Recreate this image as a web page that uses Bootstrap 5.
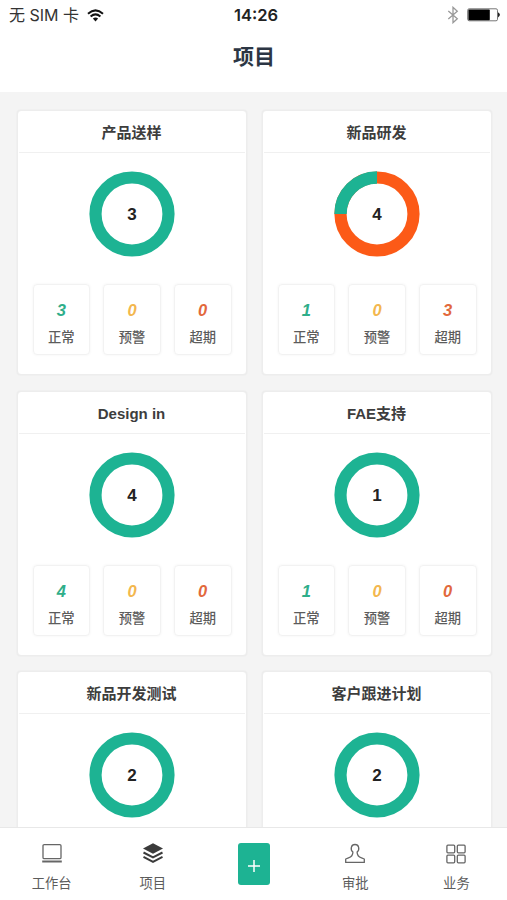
<!DOCTYPE html>
<html lang="zh-CN">
<head>
<meta charset="utf-8">
<meta name="viewport" content="width=device-width, initial-scale=1">
<title>项目</title>
<link href="https://cdn.jsdelivr.net/npm/bootstrap@5.3.0/dist/css/bootstrap.min.css" rel="stylesheet">
<style>
  body { font-family: "Liberation Sans", "Noto Sans CJK SC", sans-serif; background: #f4f4f4; color: #333; }
  .screen { height: 900px; }
  .status-bar { height: 30px; padding: 0 6px 0 9px; font-family: Inter, "Noto Sans CJK SC", sans-serif; font-size: 16px; color: #333; }
  .status-bar > div { flex: 1 1 0; }
  .status-time { font-size: 16.5px; color: #222; padding-left: 2px; }
  .page-title { height: 62px; padding: 11px 0 0 1px; font-size: 21px; line-height: 31px; color: #2c3644; }
  .board { padding: 18px 15px 0 16.500px; }
  .board-grid { display: grid; grid-template-columns: 230px 230px; gap: 15.5px 15px; }
  .project { height: 265px; border: 1px solid #ededed; border-radius: 4px; box-shadow: 0 0 2px rgba(0,0,0,.07); }
  .project-head { height: 42px; margin: 0 1px; padding-top: 1px; font-size: 15px; line-height: 41px; border-bottom: 1px solid #f0f0f0; color: #3d3d3d; }
  .ring { width: 86px; height: 86px; margin: 18px auto 0; left: .4px; }
  .ring svg { display: block; width: 86px; height: 86px; }
  .ring-count { position: absolute; inset: 0; line-height: 87px; font-size: 17px; color: #222; }
  .stats { padding: 27px 14px 0 15px; gap: 13px; }
  .stat { height: 71px; border: 1px solid #f2f2f2; border-radius: 4px; box-shadow: 0 0 3px rgba(0,0,0,.05); padding-top: 14px; }
  .stat-num { font-size: 16.5px; line-height: 22px; }
  .stat-label { font-size: 13.3px; line-height: 20px; margin-top: 7px; color: #5c5c5c; font-weight: 500; }
  .ok { color: #2fae8a; } .warn { color: #f3b74e; } .late { color: #e2683c; }
  .tabs { height: 73px; border-top: 1px solid #e8e8e8; z-index: 2; padding-left: 1px; }
  .tab { color: #5c5c5c; font-size: 13.3px; line-height: 20px; padding-top: 14px; }
  .tab svg { display: block; width: 24px; height: 24px; margin: 0 auto 8px; }
  .add-btn { width: 32px; height: 42px; margin-top: 15px; border-radius: 3px; background: #1db393; padding: 0; }
</style>
</head>
<body>
<svg class="d-none">
  <symbol id="ring-full" viewBox="0 0 86 86"><circle cx="43" cy="43" r="36.5" fill="none" stroke="#1db393" stroke-width="12.2"/></symbol>
  <symbol id="ring-quarter" viewBox="0 0 86 86"><circle cx="43" cy="43" r="36.5" fill="none" stroke="#fc5a17" stroke-width="12.2"/><path d="M6.5 43A36.5 36.5 0 0 1 43 6.5" fill="none" stroke="#1db393" stroke-width="12.4"/></symbol>
</svg>
<div class="screen d-flex flex-column overflow-hidden">
  <header class="bg-white flex-shrink-0">
    <div class="status-bar d-flex align-items-center">
      <div class="d-flex align-items-center">
        <span>无 SIM 卡</span>
        <svg class="ms-2" width="17" height="13" viewBox="0 0 17 13" fill="none" stroke="#111" stroke-width="2"><path d="M1 4.7Q8.5-1.9 16 4.7M3.6 7.5Q8.5 3.2 13.4 7.5"/><path d="M5.9 9.6Q8.5 7.4 11.1 9.6L8.5 12.4Z" fill="#111" stroke="none"/></svg>
      </div>
      <div class="status-time text-center fw-semibold">14:26</div>
      <div class="d-flex align-items-center justify-content-end">
        <svg width="12" height="18" viewBox="0 0 12 18" fill="none" stroke="#999" stroke-width="1.3"><path d="M1.3 5L10.3 12.8L6 16.7V1.3L10.3 5.2L1.3 13"/></svg>
        <svg class="ms-2" width="34" height="14" viewBox="0 0 34 14"><rect x=".7" y=".8" width="29.8" height="12" rx="1.5" fill="#fff" stroke="#777"/><rect x="1.400" y="1.600" width="21.400" height="10.600" rx=".8" fill="#000"/><path d="M31 4.2q3.800 2.600 0 5.200z" fill="#222"/></svg>
      </div>
    </div>
    <h1 class="page-title text-center fw-bold mb-0">项目</h1>
  </header>

  <main class="board flex-grow-1 overflow-hidden">
    <div class="board-grid">
      <section class="project bg-white">
        <h2 class="project-head text-center fw-bold mb-0">产品送样</h2>
        <div class="ring position-relative"><svg><use href="#ring-full"/></svg><span class="ring-count text-center fw-bold">3</span></div>
        <div class="stats d-flex text-center">
          <div class="stat flex-fill"><div class="stat-num fw-bold fst-italic ok">3</div><div class="stat-label">正常</div></div>
          <div class="stat flex-fill"><div class="stat-num fw-bold fst-italic warn">0</div><div class="stat-label">预警</div></div>
          <div class="stat flex-fill"><div class="stat-num fw-bold fst-italic late">0</div><div class="stat-label">超期</div></div>
        </div>
      </section>
      <section class="project bg-white">
        <h2 class="project-head text-center fw-bold mb-0">新品研发</h2>
        <div class="ring position-relative"><svg><use href="#ring-quarter"/></svg><span class="ring-count text-center fw-bold">4</span></div>
        <div class="stats d-flex text-center">
          <div class="stat flex-fill"><div class="stat-num fw-bold fst-italic ok">1</div><div class="stat-label">正常</div></div>
          <div class="stat flex-fill"><div class="stat-num fw-bold fst-italic warn">0</div><div class="stat-label">预警</div></div>
          <div class="stat flex-fill"><div class="stat-num fw-bold fst-italic late">3</div><div class="stat-label">超期</div></div>
        </div>
      </section>
      <section class="project bg-white">
        <h2 class="project-head text-center fw-bold mb-0">Design in</h2>
        <div class="ring position-relative"><svg><use href="#ring-full"/></svg><span class="ring-count text-center fw-bold">4</span></div>
        <div class="stats d-flex text-center">
          <div class="stat flex-fill"><div class="stat-num fw-bold fst-italic ok">4</div><div class="stat-label">正常</div></div>
          <div class="stat flex-fill"><div class="stat-num fw-bold fst-italic warn">0</div><div class="stat-label">预警</div></div>
          <div class="stat flex-fill"><div class="stat-num fw-bold fst-italic late">0</div><div class="stat-label">超期</div></div>
        </div>
      </section>
      <section class="project bg-white">
        <h2 class="project-head text-center fw-bold mb-0">FAE支持</h2>
        <div class="ring position-relative"><svg><use href="#ring-full"/></svg><span class="ring-count text-center fw-bold">1</span></div>
        <div class="stats d-flex text-center">
          <div class="stat flex-fill"><div class="stat-num fw-bold fst-italic ok">1</div><div class="stat-label">正常</div></div>
          <div class="stat flex-fill"><div class="stat-num fw-bold fst-italic warn">0</div><div class="stat-label">预警</div></div>
          <div class="stat flex-fill"><div class="stat-num fw-bold fst-italic late">0</div><div class="stat-label">超期</div></div>
        </div>
      </section>
      <section class="project bg-white">
        <h2 class="project-head text-center fw-bold mb-0">新品开发测试</h2>
        <div class="ring position-relative"><svg><use href="#ring-full"/></svg><span class="ring-count text-center fw-bold">2</span></div>
      </section>
      <section class="project bg-white">
        <h2 class="project-head text-center fw-bold mb-0">客户跟进计划</h2>
        <div class="ring position-relative"><svg><use href="#ring-full"/></svg><span class="ring-count text-center fw-bold">2</span></div>
      </section>
    </div>
  </main>

  <nav class="tabs row g-0 bg-white flex-shrink-0 text-center">
    <a class="tab col text-decoration-none" href="#"><svg viewBox="0 0 24 24" fill="none" stroke="#666" stroke-width="1.3"><rect x="3" y="2.6" width="18" height="14" rx="1.2"/><path d="M2.2 19.5H21.8" stroke-width="2"/></svg>工作台</a>
    <a class="tab col text-decoration-none" href="#"><svg viewBox="0 0 24 24"><path d="M12 1.2L22 6.5L12 11.8L2 6.5Z" fill="#3b3b3b"/><path d="M2.5 10.5L12 15.4L21.5 10.5M2.5 14.8L12 19.8L21.5 14.8" fill="none" stroke="#3b3b3b" stroke-width="2"/></svg>项目</a>
    <div class="col"><button class="add-btn btn d-inline-flex align-items-center justify-content-center" aria-label="新建"><svg class="mt-1" width="14" height="14" viewBox="0 0 14 14" stroke="#fff" stroke-width="1.5"><path d="M7 1V13M1 7H13"/></svg></button></div>
    <a class="tab col text-decoration-none" href="#"><svg viewBox="0 0 24 24" fill="none" stroke="#666" stroke-width="1.3" stroke-linejoin="round"><path d="M9.900 10C7 7.500 8 2.500 12 2.500S17 7.500 14.100 10C14.100 12.800 15.500 15 18.500 15.900L21.300 17V20.400H2.700V17L5.500 15.900C8.500 15 9.900 12.800 9.900 10Z"/></svg>审批</a>
    <a class="tab col text-decoration-none" href="#"><svg viewBox="0 0 24 24" fill="none" stroke="#666" stroke-width="1.3"><rect x="2.900" y="3.200" width="7.800" height="7.600" rx="1"/><rect x="13.300" y="3.200" width="7.800" height="7.600" rx="1"/><rect x="2.900" y="13.200" width="7.800" height="7.600" rx="1"/><rect x="13.300" y="13.200" width="7.800" height="7.600" rx="1"/></svg>业务</a>
  </nav>
</div>
<script src="https://cdn.jsdelivr.net/npm/bootstrap@5.3.0/dist/js/bootstrap.bundle.min.js"></script>
</body>
</html>
